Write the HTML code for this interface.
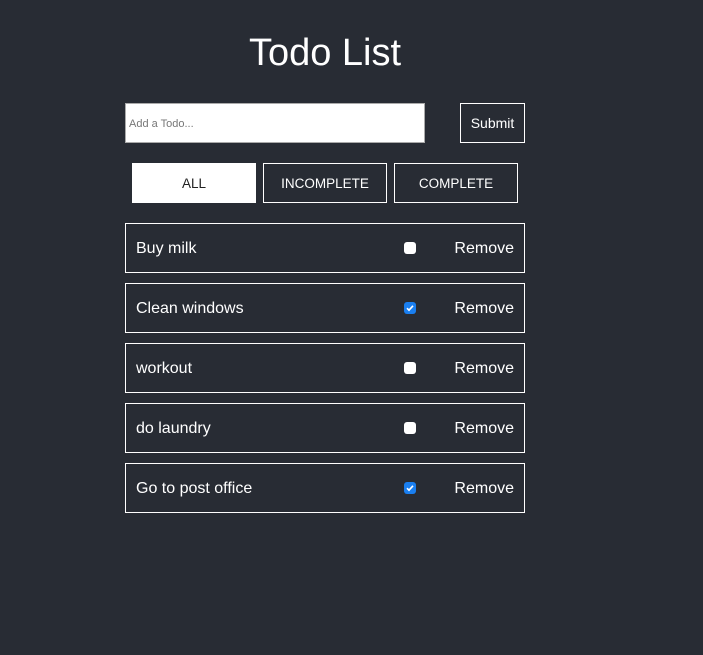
<!DOCTYPE html>
<html><head><style>
body{margin:0;width:703px;height:655px;background:#282c34;font-family:"Liberation Sans",sans-serif;color:#fff;position:relative;overflow:hidden}
.a{position:absolute;box-sizing:border-box}
h1{position:absolute;margin:0;left:0;width:650px;text-align:center;top:29px;font-size:38px;font-weight:normal;line-height:48px}
.inp{left:125px;top:103px;width:300px;height:40px;background:#fff;border:1px solid #aaa;color:#777;font-size:11px;line-height:40px;padding-left:3px}
.btn{border:1px solid #fff;text-align:center;font-size:14px;height:40px;line-height:39px}
.b2{font-size:13.5px;line-height:40px}
.item{left:125px;width:400px;height:50px;border:1px solid #fff;font-size:16px;line-height:50px}
.item .t{position:absolute;left:10px}
.item .r{position:absolute;right:10px}
.cb{position:absolute;left:278px;top:18px;width:12px;height:12px;border-radius:3px;background:#fff}
.cb.on{background:#1a7ff0}
</style></head><body>
<h1>Todo List</h1>
<div class="a inp">Add a Todo...</div>
<div class="a btn" style="left:460px;top:103px;width:65px">Submit</div>
<div class="a btn b2" style="left:132px;top:163px;width:124px;background:#fff;color:#222">ALL</div>
<div class="a btn b2" style="left:263px;top:163px;width:124px">INCOMPLETE</div>
<div class="a btn b2" style="left:394px;top:163px;width:124px">COMPLETE</div>
<div class="a item" style="top:223px"><span class="t">Buy milk</span><div class="cb"></div><span class="r">Remove</span></div>
<div class="a item" style="top:283px"><span class="t">Clean windows</span><div class="cb on"><svg width="12" height="12" viewBox="0 0 12 12" style="position:absolute;left:0;top:0"><path d="M3 6.2L5 8.2L9 3.8" stroke="#fff" stroke-width="1.6" fill="none"/></svg></div><span class="r">Remove</span></div>
<div class="a item" style="top:343px"><span class="t">workout</span><div class="cb"></div><span class="r">Remove</span></div>
<div class="a item" style="top:403px"><span class="t">do laundry</span><div class="cb"></div><span class="r">Remove</span></div>
<div class="a item" style="top:463px"><span class="t">Go to post office</span><div class="cb on"><svg width="12" height="12" viewBox="0 0 12 12" style="position:absolute;left:0;top:0"><path d="M3 6.2L5 8.2L9 3.8" stroke="#fff" stroke-width="1.6" fill="none"/></svg></div><span class="r">Remove</span></div>
</body></html>
